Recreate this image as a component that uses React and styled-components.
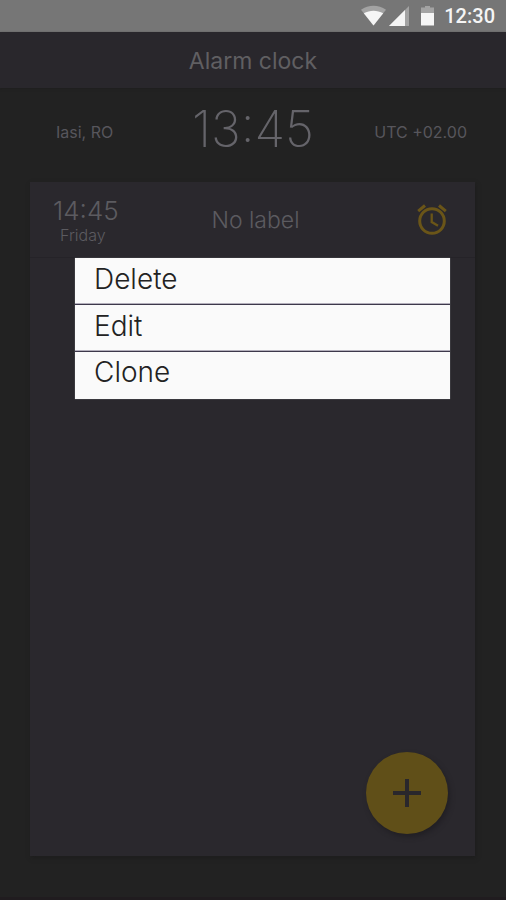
import React from 'react';
import styled, { createGlobalStyle } from 'styled-components';

const GlobalStyle = createGlobalStyle`
    * {
        box-sizing: border-box;
    }

    body {
        margin: 0;
        background: #222222;
        font-family: Inter, Roboto, sans-serif;
    }

    button {
        font: inherit;
        border: 0;
        cursor: pointer;
    }
`;

const Screen = styled.div`
    display: flex;
    flex-direction: column;
    min-height: 100vh;
    color: #5c5b60;
    border-bottom: 3px solid #201c1f;
`;

const StatusBar = styled.div`
    display: flex;
    justify-content: flex-end;
    align-items: center;
    height: 32px;
    padding-right: 11px;
    background: #767676;
    color: #f5f5f5;
    font: 500 20px/32px Roboto, sans-serif;
`;

const StatusIcons = styled.svg`
    width: 76px;
    height: 32px;
    margin-right: 7px;
`;

const Header = styled.header`
    height: 56px;
    background: #29272c;
    box-shadow: 0 1px 2px #1f1f1f;
`;

const Title = styled.h1`
    margin: 0;
    padding-top: 1px;
    text-align: center;
    font-size: 23px;
    font-weight: 400;
    line-height: 56px;
    color: #605f62;
`;

const LocalTime = styled.section`
    display: grid;
    grid-template-columns: 1fr auto 1fr;
    align-items: center;
    height: 94px;
    padding: 0 39px;
    font-size: 16px;
`;

const Zone = styled.span`
    padding: 0 0 6px 17px;
    line-height: 24px;
    color: #57565c;

    ${props => props.$end &&`
        padding-left: 0;
        text-align: right;
    `}
`;

const Clock = styled.time`
    font-size: 50px;
    font-weight: 200;
    line-height: 80px;
    padding-bottom: 12px;
    color: #65646a;
`;

const Card = styled.main`
    flex: 1;
    display: flex;
    flex-direction: column;
    margin: 0 31px 41px 30px;
    background: #2a282d;
    box-shadow: 1px 2px 4px #1d1d1d;
`;

const Alarm = styled.article`
    position: relative;
    display: grid;
    grid-template-columns: 1fr auto 1fr;
    align-items: center;
    height: 76px;
    padding: 0 25px 0 23px;
    border-bottom: 1px solid #252328;
`;

const AlarmTime = styled.div`
    justify-self: start;
    padding-top: 2px;
    text-align: center;
`;

const Hour = styled.time`
    display: block;
    font-size: 26px;
    font-weight: 300;
    line-height: 28px;
`;

const Day = styled.span`
    display: block;
    padding-right: 6px;
    font-size: 16px;
    font-weight: 300;
    line-height: 20px;
`;

const Label = styled.span`
    padding-left: 8px;
    font-size: 23px;
    font-weight: 300;
    line-height: 28px;
`;

const AlarmToggle = styled.button`
    justify-self: end;
    display: flex;
    padding: 0;
    background: none;
    color: #6a5518;
`;

const Menu = styled.div`
    position: absolute;
    top: 76px;
    left: 45px;
    right: 25px;
    display: flex;
    flex-direction: column;
    background: #fafafa;
    box-shadow: 0 0 1px #8f8d94;
`;

const MenuItem = styled.button`
    height: 47px;
    padding: 0 19px 4px;
    background: none;
    color: #222222;
    text-align: left;
    font-size: 28px;
    font-weight: 300;
    line-height: 40px;

    &:first-child {
        height: 46px;
    }

    &:last-child {
        height: 48px;
        padding-bottom: 8px;
    }

    & + & {
        border-top: 1px solid #3d384b;
        box-shadow: 0 -1px #b3afbb;
    }
`;

const AddButton = styled.button`
    display: flex;
    align-items: center;
    justify-content: center;
    align-self: flex-end;
    width: 82px;
    height: 82px;
    margin: auto 27px 22px 0;
    border-radius: 50%;
    background: #604f18;
    color: #29272c;
    box-shadow: 2px 3px 5px #211f24;
`;

const actions = ['Delete', 'Edit', 'Clone'];

export default function App(){
    return(
        <>
            <GlobalStyle/>
            <Screen>
                <StatusBar>
                    <StatusIcons viewBox="0 0 76 32" aria-hidden="true">
                        <path d="M0 9.7C7.5 4.3 17.5 4.3 25 9.7L12.5 25.5z" fill="#a3a3a3"/>
                        <path d="M2.8 13.3C8.7 9.8 16.3 9.8 22.2 13.3L12.5 25.5z" fill="#f5f5f5"/>
                        <path d="M48 6v20H28z" fill="#a3a3a3"/>
                        <path d="M44 10v16H28z" fill="#f5f5f5"/>
                        <path d="M60 7.5h4V6h5v1.500h4V13H60z" fill="#a3a3a3"/>
                        <path d="M60 13h13v12.500H60z" fill="#f5f5f5"/>
                    </StatusIcons>
                    <time>12:30</time>
                </StatusBar>
                <Header>
                    <Title>Alarm clock</Title>
                </Header>
                <LocalTime>
                    <Zone>Iasi, RO</Zone>
                    <Clock>13:45</Clock>
                    <Zone $end>UTC +02.00</Zone>
                </LocalTime>
                <Card>
                    <Alarm>
                        <AlarmTime>
                            <Hour>14:45</Hour>
                            <Day>Friday</Day>
                        </AlarmTime>
                        <Label>No label</Label>
                        <AlarmToggle aria-label="Toggle alarm">
                            <svg width="36" height="36" viewBox="0 0 36 36" fill="none" stroke="currentColor">
                                <circle cx="18" cy="19" r="12.3" strokeWidth="3"/>
                                <path d="M4.200 9.200l6.800-5.700M31.800 9.200L25 3.500" strokeWidth="3"/>
                                <path d="M17.700 11.500v8.500l6.300 3.800" strokeWidth="2.300"/>
                            </svg>
                        </AlarmToggle>
                        <Menu role="menu">
                            {actions.map(action => (
                                <MenuItem key={action} role="menuitem">{action}</MenuItem>
                            ))}
                        </Menu>
                    </Alarm>
                    <AddButton aria-label="Add alarm">
                        <svg width="28" height="28" viewBox="0 0 28 28" fill="currentColor">
                            <path d="M12 0h4v12h12v4H16v12h-4V16H0v-4h12z"/>
                        </svg>
                    </AddButton>
                </Card>
            </Screen>
        </>
    );
}
